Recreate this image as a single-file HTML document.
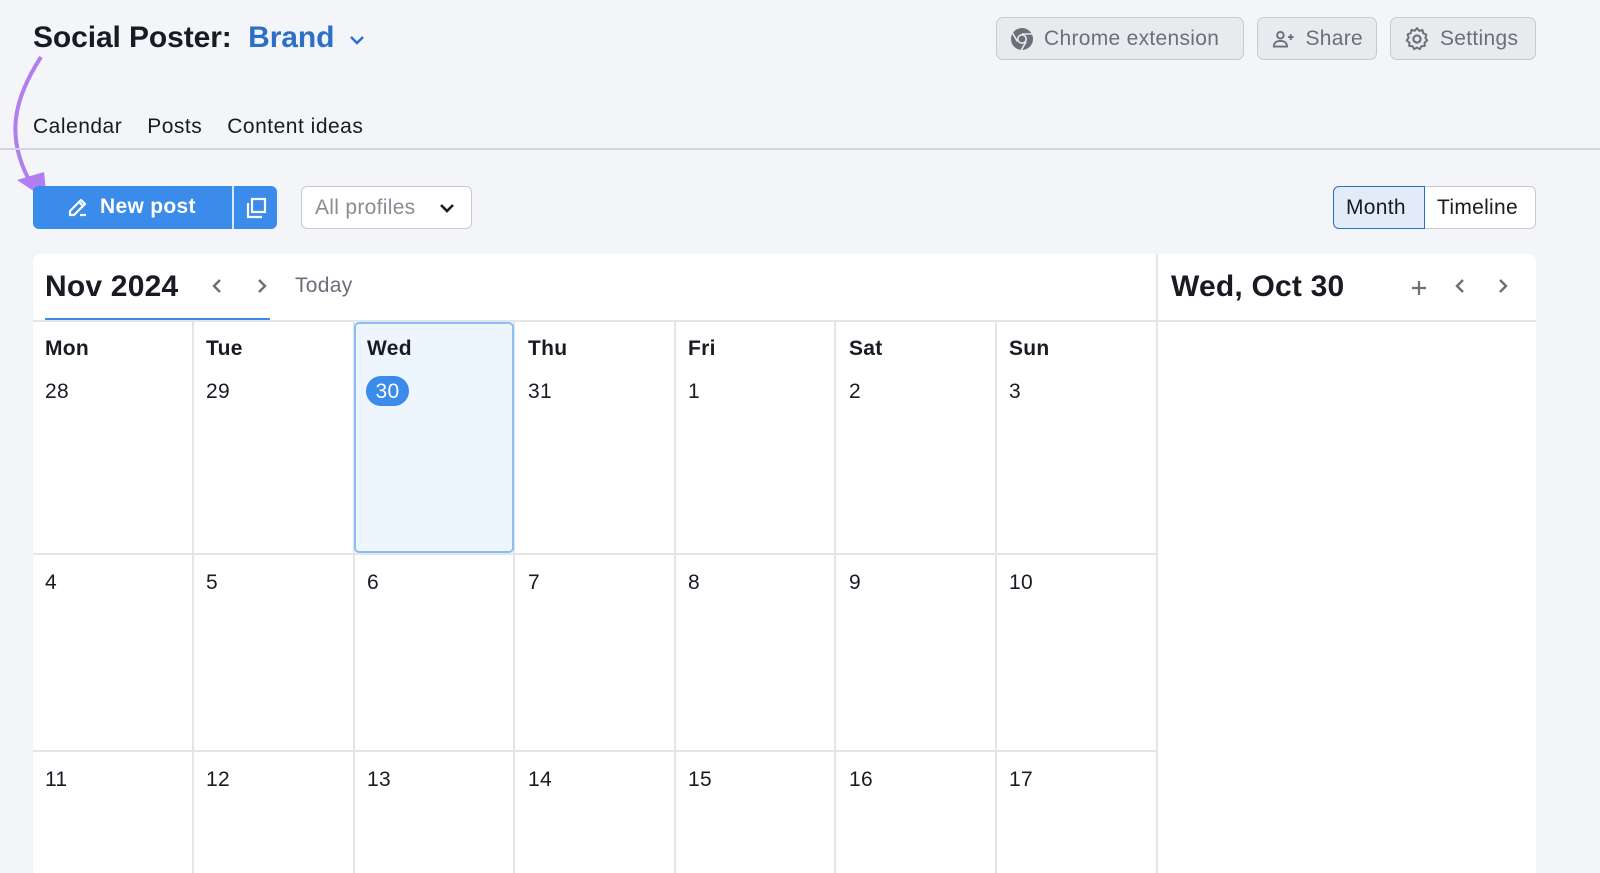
<!DOCTYPE html>
<html style="width:1600px;height:873px;overflow:hidden"><head><style>
*{box-sizing:border-box;margin:0;padding:0}
html,body{overflow:hidden}
body{width:1600px;height:873px;background:#f4f5f9;font-family:"Liberation Sans",Arial,sans-serif;color:#191b23;position:relative;overflow:hidden}
.abs{position:absolute}
.title{left:33px;top:21px;font-size:30px;font-weight:bold;letter-spacing:-0.1px}
.title span{color:#2b6fc9}
.btn{position:absolute;top:17px;height:43px;border:1px solid #c7c9d0;border-radius:7px;background:#e9eaee;color:#6c6e79;font-size:21px;display:flex;align-items:center;padding:0 13px;gap:10px;letter-spacing:0.3px}
.tabs{left:33px;top:115px;font-size:21px;display:flex;gap:25px;letter-spacing:0.5px}
.rule{left:0;top:148px;width:1600px;height:2px;background:#d3d5da}
.np{left:33px;top:186px;width:244px;height:43px;background:#3a8bea;border-radius:6px;color:#fff;font-size:21px;font-weight:bold;letter-spacing:0.3px}
.sel{left:301px;top:186px;width:171px;height:43px;border:1px solid #c7c9d0;border-radius:6px;background:#fff;color:#8a8c95;font-size:21px;padding:9px 13px;letter-spacing:0.3px}
.card{left:33px;top:254px;width:1503px;height:619px;background:#fff;border-radius:8px 8px 0 0;overflow:hidden}
.line{background:#e4e5ea;position:absolute}
.day{position:absolute;font-size:21px;letter-spacing:0.3px}
.dh{font-weight:bold}
</style></head><body>
<div class="abs title">Social Poster:&nbsp; <span>Brand</span> <svg width="20" height="14" viewBox="0 0 20 14" style="margin-left:4px"><path d="M4 4l6 6 6-6" stroke="#2b6fc9" stroke-width="2.4" fill="none"/></svg></div>
<svg class="abs" style="left:5px;top:52px" width="45" height="155" viewBox="0 0 45 155"><path d="M36 5C10 45 -2 85 28 135" stroke="#b07ef0" stroke-width="4" fill="none"/><path d="M12 128L42 148 39 120Z" fill="#b07ef0"/></svg>
<div class="btn" style="left:996px;width:248px"><svg width="24" height="24" viewBox="0 0 24 24"><circle cx="12" cy="12" r="11" fill="#6c6e79"/><circle cx="12" cy="12" r="5" fill="#e9eaee"/><circle cx="12" cy="12" r="3.4" fill="#6c6e79"/><path d="M12 7h10M7.5 14.5L2.5 6M16 15l-5 8.5" stroke="#e9eaee" stroke-width="1.6"/></svg>Chrome extension</div>
<div class="btn" style="left:1257px;width:120px"><svg width="26" height="22" viewBox="0 0 26 22"><circle cx="10" cy="7" r="3.5" stroke="#6c6e79" stroke-width="2" fill="none"/><path d="M3 19c0-4 3-6 7-6s7 2 7 6z" stroke="#6c6e79" stroke-width="2" fill="none"/><path d="M18 9h6M21 6v6" stroke="#6c6e79" stroke-width="2"/></svg>Share</div>
<div class="btn" style="left:1390px;width:146px"><svg width="26" height="26" viewBox="0 0 24 24"><path d="M12 2l2 2.5 3-.8.8 3 2.9 1.3-1 2.9 1.8 2.5-2.5 1.9.2 3.1-3.1.3-1.5 2.7-2.6-1.6-2.6 1.6-1.5-2.7-3.1-.3.2-3.1L2.5 13.3l1.8-2.5-1-2.9 2.9-1.3.8-3 3 .8z" stroke="#6c6e79" stroke-width="1.8" fill="none" stroke-linejoin="round"/><circle cx="12" cy="12" r="3.3" stroke="#6c6e79" stroke-width="2" fill="none"/></svg>Settings</div>
<div class="abs tabs"><span>Calendar</span><span>Posts</span><span>Content ideas</span></div>
<div class="abs rule"></div>
<div class="abs np"><div class="abs" style="left:33px;top:9px;display:flex;align-items:center;gap:10px"><svg width="24" height="24" viewBox="0 0 24 24"><path d="M4 20v-4L15 5l4 4L8 20zM13 7l4 4M14 20h6" stroke="#fff" stroke-width="2.2" fill="none" stroke-linejoin="round"/></svg>New post</div><div class="abs" style="left:199px;top:0;width:2px;height:43px;background:#fff;opacity:.8"></div><svg class="abs" style="left:211px;top:10px" width="24" height="24" viewBox="0 0 24 24"><rect x="8" y="3" width="13" height="13" stroke="#fff" stroke-width="2.2" fill="none"/><path d="M4 7v14h14" stroke="#fff" stroke-width="2.2" fill="none"/></svg></div>
<div class="abs sel">All profiles<svg class="abs" style="left:136px;top:14px" width="18" height="14" viewBox="0 0 18 14"><path d="M3 4l6 6 6-6" stroke="#191b23" stroke-width="2.6" fill="none"/></svg></div>
<div class="abs" style="left:1333px;top:186px;width:203px;height:43px;border:1px solid #c7c9d0;border-radius:6px;background:#fff;font-size:21px;letter-spacing:0.3px"><div class="abs" style="left:-1px;top:-1px;width:92px;height:43px;background:#e2ebf8;border:1.5px solid #2b6fc9;border-radius:6px 0 0 6px;padding:9px 12px">Month</div><div class="abs" style="left:103px;top:9px">Timeline</div></div>
<div class="abs card">
<div class="abs" style="left:12px;top:16px;font-size:30px;font-weight:bold;letter-spacing:0.2px">Nov 2024</div>
<svg class="abs" style="left:176px;top:22px" width="16" height="20" viewBox="0 0 16 20"><path d="M11 4l-6 6 6 6" stroke="#6c6e79" stroke-width="2.4" fill="none"/></svg>
<svg class="abs" style="left:221px;top:22px" width="16" height="20" viewBox="0 0 16 20"><path d="M5 4l6 6-6 6" stroke="#6c6e79" stroke-width="2.4" fill="none"/></svg>
<div class="abs" style="left:262px;top:20px;font-size:21px;color:#6c6e79;letter-spacing:0.3px">Today</div>
<div class="abs" style="left:12px;top:64px;width:225px;height:3px;background:#3a8bea"></div>
<div class="abs" style="left:1138px;top:16px;font-size:30px;font-weight:bold;letter-spacing:0.2px">Wed, Oct 30</div>
<svg class="abs" style="left:1376px;top:24px" width="20" height="20" viewBox="0 0 20 20"><path d="M10 3v14M3 10h14" stroke="#6c6e79" stroke-width="2.2"/></svg>
<svg class="abs" style="left:1419px;top:22px" width="16" height="20" viewBox="0 0 16 20"><path d="M11 4l-6 6 6 6" stroke="#6c6e79" stroke-width="2.4" fill="none"/></svg>
<svg class="abs" style="left:1462px;top:22px" width="16" height="20" viewBox="0 0 16 20"><path d="M5 4l6 6-6 6" stroke="#6c6e79" stroke-width="2.4" fill="none"/></svg>
<div class="line" style="left:0;top:66px;width:1503px;height:2px"></div>
<div class="line" style="left:0;top:299px;width:1124px;height:2px"></div>
<div class="line" style="left:0;top:496px;width:1124px;height:2px"></div>
<div class="line" style="left:159px;top:67px;width:2px;height:560px"></div>
<div class="line" style="left:320px;top:67px;width:2px;height:560px"></div>
<div class="line" style="left:480px;top:67px;width:2px;height:560px"></div>
<div class="line" style="left:641px;top:67px;width:2px;height:560px"></div>
<div class="line" style="left:801px;top:67px;width:2px;height:560px"></div>
<div class="line" style="left:962px;top:67px;width:2px;height:560px"></div>
<div class="line" style="left:1123px;top:0;width:2px;height:619px"></div>
<div class="abs" style="left:321px;top:68px;width:160px;height:231px;background:#edf6fe;border:2px solid #8bbef2;border-radius:5px"></div>
</div>
<div class="day dh" style="left:45px;top:337px">Mon</div><div class="day dh" style="left:206px;top:337px">Tue</div><div class="day dh" style="left:367px;top:337px">Wed</div><div class="day dh" style="left:528px;top:337px">Thu</div><div class="day dh" style="left:688px;top:337px">Fri</div><div class="day dh" style="left:849px;top:337px">Sat</div><div class="day dh" style="left:1009px;top:337px">Sun</div>
<div class="day" style="left:45px;top:380px">28</div><div class="day" style="left:206px;top:380px">29</div><div class="day" style="left:366px;top:376px;width:43px;height:30px;background:#3a8bea;color:#fff;border-radius:15px;text-align:center;padding-top:4px">30</div><div class="day" style="left:528px;top:380px">31</div><div class="day" style="left:688px;top:380px">1</div><div class="day" style="left:849px;top:380px">2</div><div class="day" style="left:1009px;top:380px">3</div>
<div class="day" style="left:45px;top:571px">4</div><div class="day" style="left:206px;top:571px">5</div><div class="day" style="left:367px;top:571px">6</div><div class="day" style="left:528px;top:571px">7</div><div class="day" style="left:688px;top:571px">8</div><div class="day" style="left:849px;top:571px">9</div><div class="day" style="left:1009px;top:571px">10</div>
<div class="day" style="left:45px;top:768px">11</div><div class="day" style="left:206px;top:768px">12</div><div class="day" style="left:367px;top:768px">13</div><div class="day" style="left:528px;top:768px">14</div><div class="day" style="left:688px;top:768px">15</div><div class="day" style="left:849px;top:768px">16</div><div class="day" style="left:1009px;top:768px">17</div>
</body></html>
